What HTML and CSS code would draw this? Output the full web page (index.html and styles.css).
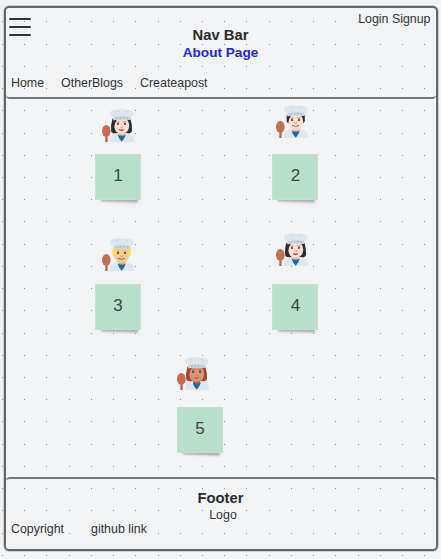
FILE: index.html
```
<!DOCTYPE html>
<html lang="en">
<head>
<meta charset="utf-8">
<title>About Page</title>
<link rel="stylesheet" href="styles.css">
</head>
<body>
<svg class="defs" width="0" height="0" aria-hidden="true">
  <symbol id="chef" viewBox="0 0 96 99">
    <path d="M10 72h7v27h-7z" fill="#b9654d"/>
    <ellipse cx="13" cy="66" rx="13" ry="18" fill="#c46f55"/>
    <path d="M24 99V90Q25 78 37 75L47 69H71L82 76Q96 79 96 90V99Z" fill="#dfe7ee"/>
    <path class="long" d="M31 29Q25 50 28 69Q36 75 44 72H76Q85 76 90 67Q91 46 85 29Z"/>
    <path class="short" d="M32 29V50L40 57H80L86 49V29Z"/>
    <path d="M49 64H70V81L59 88L48 80Z" fill="var(--shade)"/>
    <path d="M37 30H82V51Q80 67 69 72Q59 77 48 72Q37 66 37 51Z" fill="var(--skin)"/>
    <path class="fringe" d="M34 30H46Q40 38 37 50H34ZM74 30H85V50H82Q81 38 74 30Z"/>
    <path d="M44 39h9M64 39h9" stroke="var(--brow)" stroke-width="1.5" fill="none"/>
    <ellipse cx="48" cy="45" rx="3" ry="3.5" fill="#74362b"/><ellipse cx="69" cy="45" rx="3" ry="3.5" fill="#74362b"/>
    <path d="M55 54Q59 57 63 54" stroke="#c88273" stroke-width="2.5" fill="none"/>
    <path class="lips" d="M50 60Q58 62 67 60Q65 67 58 67Q52 67 50 60Z" fill="#df5550"/>
    <path class="smile" d="M48 61Q59 67 69 61" stroke="#ad5850" stroke-width="3" fill="none"/>
    <path d="M47 77Q59 82 71 77L67 88L59 98L51 88Z" fill="#2369a0"/>
    <path d="M34 23Q24 23 24 12Q26 3 38 3Q46 0 58 1Q71 0 79 3Q91 1 94 12Q95 23 85 24V33Q59 30 34 34Z" fill="#dde6ed"/>
    <path d="M34 24Q59 20 85 24V33Q59 29 34 34Z" fill="#c7d4de"/>
    <path d="M45 24v7M55 23v7M65 23v7M75 24v7" stroke="#9eb1bf" stroke-width="2"/>
    <path d="M42 10Q44 6 48 6M70 6Q75 6 78 10" stroke="#bdcbd5" stroke-width="2" fill="none"/>
  </symbol>
</svg>
<svg class="dots" aria-hidden="true">
  <defs>
    <pattern id="grid" x="2" y="21" width="200" height="200" patternUnits="userSpaceOnUse">
      <path d="M0 .5H200M0 23.5H200M0 45.5H200M0 67.5H200M0 89.5H200M0 112.5H200M0 134.5H200M0 156.5H200M0 178.5H200" stroke="#8e8f91" stroke-dasharray="1 21 1 21 1 22 1 21 1 21 1 21 1 22 1 21 1 21"/>
    </pattern>
  </defs>
  <rect width="100%" height="100%" fill="url(#grid)"/>
</svg>
<div class="page">
  <header class="header">
    <div class="top">
      <div class="menu"><i></i><i></i><i></i></div>
      <div class="account">Login Signup</div>
    </div>
    <h1>Nav Bar</h1>
    <h2>About Page</h2>
    <nav class="nav"><span>Home</span><span>OtherBlogs</span><span>Createapost</span></nav>
  </header>
  <main class="people">
    <article class="card c1"><div class="slot"><svg class="chef"><use href="#chef"/></svg></div><div class="note">1</div></article>
    <article class="card c2"><div class="slot"><svg class="chef"><use href="#chef"/></svg></div><div class="note">2</div></article>
    <article class="card c3"><div class="slot"><svg class="chef"><use href="#chef"/></svg></div><div class="note">3</div></article>
    <article class="card c4"><div class="slot"><svg class="chef"><use href="#chef"/></svg></div><div class="note">4</div></article>
    <article class="card c5"><div class="slot"><svg class="chef"><use href="#chef"/></svg></div><div class="note">5</div></article>
  </main>
  <footer class="footer">
    <h3>Footer</h3>
    <p>Logo</p>
    <div class="links"><span>Copyright</span><span>github link</span></div>
  </footer>
</div>
</body>
</html>
```
FILE: styles.css
```
* { box-sizing: border-box; }
body {
  margin: 0;
  height: 559px;
  overflow: hidden;
  background: #f1f3f5;
  color: #333436;
  font: 12.4px/16px "Liberation Sans", Arial, sans-serif;
}
h1, h2, h3, p { margin: 0; }
.defs { position: absolute; }
.dots { position: absolute; inset: 0; width: 441px; height: 559px; }
.page {
  position: relative;
  isolation: isolate;
  width: 434px;
  height: 545px;
  margin: 6px 0 0 3.5px;
  border: 2px solid #666769;
  border-radius: 5px;
  box-shadow: 0 0 0 .5px #a6a7a8;
  display: flex;
  flex-direction: column;
}
.header {
  height: 91px;
  border-bottom: 2px solid #747577;
  border-radius: 0 0 4px 4px;
  text-align: center;
}
.top { display: flex; justify-content: space-between; height: 18px; padding: 3px 5px 0 3.5px; }
.menu { width: 22px; padding-top: 6.6px; }
.menu i { display: block; height: 2px; margin-bottom: 6.3px; background: #333436; border-radius: 1px; }
.account { white-space: nowrap; }
h1, h3 { font-size: 14.8px; line-height: 18px; color: #2a2b2d; }
h2 { font-size: 13.6px; line-height: 17px; color: #2028d8; }
.nav { display: flex; gap: 17px; padding: 14px 0 0 5.5px; }
.people {
  flex: 1;
  display: grid;
  grid-template-columns: 46px 46px;
  grid-template-rows: 130px 123px 96px;
  column-gap: 131.4px;
  padding: 5px 0 0 89.5px;
}
.card {
  --skin: #fae1d2;
  --shade: #e7bda6;
  --hair: #292e33;
  --brow: #4d3934;
  width: 46px;
}
.c3 { --skin: #f4cf93; --shade: #e2ae75; --hair: #fbe331; --brow: #c38a36; }
.c5 { --skin: #d09a7b; --shade: #a76b50; --hair: #a8442a; --brow: #69301f; margin-left: 82px; }
.slot { display: flex; height: 50px; }
.chef { flex: none; width: 32px; height: 33px; }
.c1 .chef { margin: 4.5px 0 0 7px; }
.c3 .chef { margin: 3.5px 0 0 7px; }
.c2 .chef, .c4 .chef { margin: .5px 0 0 3.5px; }
.c4 .chef { margin-top: -1px; }
.c5 .chef { margin-top: -.5px; }
.long, .short, .fringe { fill: var(--hair); }
.long, .lips { display: var(--long, inline); }
.short, .smile { display: var(--short, none); }
.c2, .c3 { --long: none; --short: inline; }
.note {
  position: relative;
  height: 46px;
  background: #b7dfcc;
  border: 1px solid #c0e2d2;
  color: #3c4541;
  font: 17px/42px "Liberation Sans", Arial, sans-serif;
  text-align: center;
}
.note::after {
  content: "";
  position: absolute;
  z-index: -1;
  left: 5px;
  right: 2px;
  bottom: -3px;
  height: 4px;
  background: #aaacac;
  filter: blur(.8px);
  transform: rotate(2deg);
}
.footer {
  height: 72px;
  border-top: 2px solid #747577;
  border-radius: 4px 4px 0 0;
  text-align: center;
}
.footer h3 { padding-top: 10px; }
.footer p { padding-left: 5px; line-height: 16px; }
.links { display: flex; gap: 27px; padding-left: 5.5px; line-height: 13px; }
```
